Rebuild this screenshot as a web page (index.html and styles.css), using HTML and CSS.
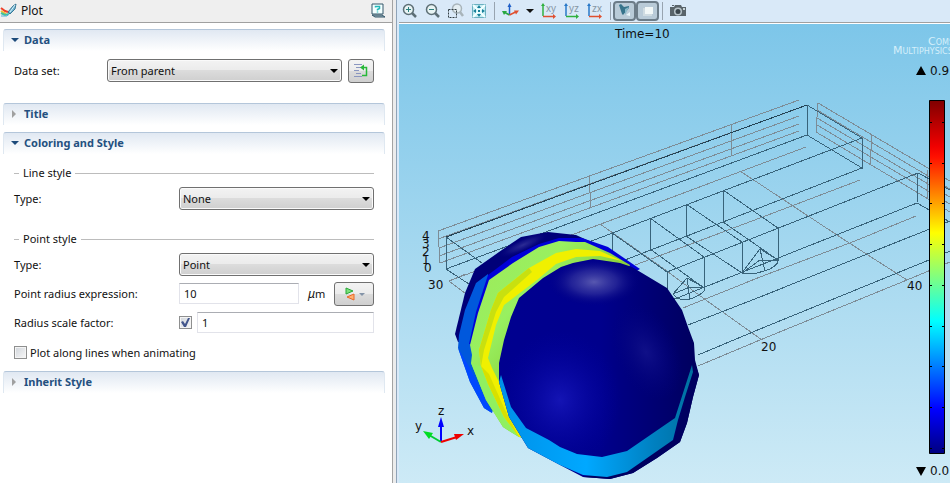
FILE: index.html
```html
<!DOCTYPE html>
<html lang="en">
<head>
<meta charset="utf-8">
<title>Plot</title>
<link rel="stylesheet" href="styles.css">
</head>
<body>
<main class="app">
  <section class="settings">
    <header class="titlebar">
      <svg class="plot-icon" width="18" height="16" viewBox="0 0 18 16">
        <path d="M1 5l4 3 3 1" stroke="#f04028" stroke-width="2" fill="none"/>
        <path d="M1 8l5 3" stroke="#f0c030" stroke-width="2" fill="none"/>
        <path d="M1 10l4 2 4-1" stroke="#40c0a0" stroke-width="2" fill="none"/>
        <path d="M1 13h6l3-3" stroke="#58b0d8" fill="none"/>
        <path d="M8 9l5-6 3-2-1 5-5 5z" fill="#6fb4d0" stroke="#3a7896"/>
        <path d="M10 9l5-7" stroke="#d8f0fa"/>
      </svg>
      <h1>Plot</h1>
      <button class="help" aria-label="Help">
        <svg width="16" height="16" viewBox="0 0 16 16">
          <path d="M2 1h11v10H2z" fill="#f4ffff" stroke="#34586a"/>
          <path d="M2 12h10l3 2H5z" fill="#9ab0ba" stroke="#34586a"/>
          <path d="M5.500 4.500V3.500h4v2l-2 1v1M7.500 8.500v1" stroke="#20b8b8" stroke-width="1.500" fill="none"/>
        </svg>
      </button>
    </header>

    <div class="sections">
      <h2 class="bar open"><button>Data</button></h2>
      <div class="body data">
        <div class="row wide">
          <label for="dataset">Data set:</label>
          <div class="drop"><select id="dataset"><option>From parent</option></select></div>
          <button class="tool go" aria-label="Go to source">
            <svg width="16" height="16" viewBox="0 0 16 16">
              <path d="M1 1.500h8M3 4.500h5M1 7.500h5M3 10.500h5M1 13.500h8" stroke="#8a96c0"/>
              <path d="M9 12.500h4.500v-8H9" stroke="#28b838" stroke-width="1.500" fill="none"/>
              <path d="M7 4.500l4-3v6z" fill="#28b838"/>
            </svg>
          </button>
        </div>
      </div>

      <h2 class="bar"><button>Title</button></h2>

      <h2 class="bar open spaced"><button>Coloring and Style</button></h2>
      <div class="body style">
        <h3>Line style</h3>
        <div class="row">
          <label for="ltype">Type:</label>
          <div class="drop"><select id="ltype"><option>None</option></select></div>
        </div>
        <h3 class="next">Point style</h3>
        <div class="row">
          <label for="ptype">Type:</label>
          <div class="drop"><select id="ptype"><option>Point</option></select></div>
        </div>
        <div class="row">
          <label for="radius">Point radius expression:</label>
          <div class="fields">
            <input id="radius" type="text" value="10">
            <span class="unit"><i>μ</i>m</span>
            <button class="tool expr" aria-label="Replace expression">
              <svg width="24" height="16" viewBox="0 0 24 16">
                <path d="M4 2l7 3-7 3z" fill="#7be07b" stroke="#28a838"/>
                <path d="M12 8v6l-7-3z" fill="#ffb070" stroke="#e86828"/>
                <path d="M17 7h6l-3 3z" fill="#8494a8"/>
              </svg>
            </button>
          </div>
        </div>
        <div class="row">
          <label for="factor">Radius scale factor:</label>
          <div class="fields tight">
            <input type="checkbox" checked aria-label="Use radius scale factor">
            <input id="factor" type="text" value="1">
          </div>
        </div>
        <div class="row check">
          <input id="along" type="checkbox">
          <label for="along">Plot along lines when animating</label>
        </div>
      </div>

      <h2 class="bar"><button>Inherit Style</button></h2>
    </div>
  </section>

  <section class="graphics">
    <nav class="toolbar">
      <button aria-label="Zoom in"><svg width="16" height="16" viewBox="0 0 16 16"><circle cx="6.500" cy="6.500" r="5" fill="#e8f4f4" stroke="#5d6f76" stroke-width="1.500"/><path d="M10 10l4 4" stroke="#5d6f76" stroke-width="2.500"/><path d="M4 6.500h5M6.500 4v5" stroke="#2a8080"/></svg></button>
      <button aria-label="Zoom out"><svg width="16" height="16" viewBox="0 0 16 16"><circle cx="6.500" cy="6.500" r="5" fill="#e8f4f4" stroke="#5d6f76" stroke-width="1.500"/><path d="M10 10l4 4" stroke="#5d6f76" stroke-width="2.500"/><path d="M4 6.500h5" stroke="#2a8080"/></svg></button>
      <button aria-label="Zoom box"><svg width="16" height="16" viewBox="0 0 16 16"><circle cx="9" cy="5.500" r="4.500" fill="#e4eef2" stroke="#a8b4ba" stroke-width="1.500"/><path d="M12 9l3 4" stroke="#a8b4ba" stroke-width="2.500"/><path d="M.5 6.500h8v8h-8z" fill="none" stroke="#333f44" stroke-dasharray="2 1"/></svg></button>
      <button aria-label="Zoom extents"><svg width="16" height="16" viewBox="0 0 16 16"><path d="M1.500 1.500h13v13h-13z" fill="#c8ecf4" stroke="#6ab0c0"/><path d="M2 2l12 12M14 2L2 14" stroke="#f0ffff" stroke-width="2"/><path d="M8 2l2 3H6zM8 14l2-3H6zM2 8l3-2v4zM14 8l-3-2v4z" fill="#167f98"/><path d="M7 7h2v2H7z" fill="#167f98"/></svg></button>
      <span class="sep"></span>
      <button aria-label="Default 3D view"><svg width="18" height="16" viewBox="0 0 18 16"><path d="M8.500 12V3" stroke="#2060c8" stroke-width="1.500"/><path d="M6.500 4l2-4 2 4z" fill="#2060c8"/><path d="M8.500 12L3 9" stroke="#28a840" stroke-width="1.500"/><path d="M1 8h5l-3 4z" fill="#28a840"/><path d="M8.500 12l6-3" stroke="#e05030" stroke-width="1.500"/><path d="M18 7.500h-5l2 4z" fill="#e05030"/></svg></button>
      <button class="more" aria-label="View menu"><svg width="8" height="6" viewBox="0 0 8 6"><path d="M0 1h8L4 5z" fill="#111"/></svg></button>
      <button aria-label="xy view"><svg width="16" height="16" viewBox="0 0 16 16"><path d="M2 2v11" stroke="#30b040" stroke-width="1.500"/><path d="M0 3l2-3 2 3z" fill="#30b040"/><path d="M2 13.500h11" stroke="#e05030" stroke-width="1.500"/><path d="M12 11l3 2.500-3 2.500z" fill="#e05030"/><text class="v" x="5" y="9">xy</text></svg></button>
      <button aria-label="yz view"><svg width="16" height="16" viewBox="0 0 16 16"><path d="M2 2v11" stroke="#2878c8" stroke-width="1.500"/><path d="M0 3l2-3 2 3z" fill="#2878c8"/><path d="M2 13.500h11" stroke="#30b040" stroke-width="1.500"/><path d="M12 11l3 2.500-3 2.500z" fill="#30b040"/><text class="v" x="5" y="9">yz</text></svg></button>
      <button aria-label="zx view"><svg width="16" height="16" viewBox="0 0 16 16"><path d="M2 2v11" stroke="#2878c8" stroke-width="1.500"/><path d="M0 3l2-3 2 3z" fill="#2878c8"/><path d="M2 13.500h11" stroke="#e05030" stroke-width="1.500"/><path d="M12 11l3 2.500-3 2.500z" fill="#e05030"/><text class="v" x="5" y="9">zx</text></svg></button>
      <span class="sep"></span>
      <span class="toggles">
        <button class="on" aria-label="Scene light" aria-pressed="true"><svg width="16" height="16" viewBox="0 0 16 16"><path d="M2 2l2-1 3 3 5-1v2L6 12 5 11z" fill="#37748c"/><path d="M8 6l4-2-4 8z" fill="#86b8c8"/><path d="M9 12l4-3v4z" fill="#e8f6fa"/></svg></button>
        <button class="on" aria-label="Transparency" aria-pressed="true"><svg width="16" height="16" viewBox="0 0 16 16"><path d="M3 5h9v8H3z" fill="#d0dce2"/><path d="M5 4h8v7H5z" fill="#f2f8f8"/></svg></button>
      </span>
      <span class="sep close"></span>
      <button aria-label="Image snapshot"><svg width="18" height="16" viewBox="0 0 18 16"><path d="M1 4h4l1-2h6l1 2h4v9H1z" fill="#59646a"/><path d="M3 2h2v1H3z" fill="#59646a"/><circle cx="9" cy="8.500" r="4" fill="#b8c4ca"/><circle cx="9" cy="8.500" r="2.500" fill="#3b464c"/><path d="M14 5h2v2h-2z" fill="#c8d4d8"/></svg></button>
    </nav>

    <svg class="scene" viewBox="399 24 551 459" preserveAspectRatio="xMinYMin slice" role="img" aria-label="3D plot, Time=10">
      <defs>
        <linearGradient id="jet" x1="0" y1="0" x2="0" y2="1">
          <stop offset="0" stop-color="#800000"/><stop offset=".13" stop-color="#f00000"/><stop offset=".16" stop-color="#ff1000"/>
          <stop offset=".375" stop-color="#ffff00"/><stop offset=".5" stop-color="#80ff80"/><stop offset=".625" stop-color="#00ffff"/>
          <stop offset=".875" stop-color="#0000ff"/><stop offset="1" stop-color="#000080"/>
        </linearGradient>
        <radialGradient id="shine"><stop offset="0" stop-color="#5858b0"/><stop offset=".5" stop-color="#30309c" stop-opacity=".7"/><stop offset="1" stop-color="#000080" stop-opacity="0"/></radialGradient>
        <radialGradient id="glow"><stop offset="0" stop-color="#1414b4"/><stop offset="1" stop-color="#0000a0" stop-opacity="0"/></radialGradient>
        <radialGradient id="soft"><stop offset="0" stop-color="#101088"/><stop offset="1" stop-color="#000080" stop-opacity="0"/></radialGradient>
        <linearGradient id="ball" x1="0" y1="0" x2="1" y2="0"><stop offset="0" stop-color="#000090"/><stop offset=".5" stop-color="#00008c"/><stop offset="1" stop-color="#000058"/></linearGradient>
        <linearGradient id="cyan" x1="0" y1="0" x2="1" y2="0"><stop offset="0" stop-color="#0090e8"/><stop offset=".45" stop-color="#00a8ff"/><stop offset=".8" stop-color="#0080c0"/><stop offset="1" stop-color="#0070a0"/></linearGradient>
        <linearGradient id="green" x1="0" y1="0" x2="1" y2="1"><stop offset="0" stop-color="#a0e858"/><stop offset=".3" stop-color="#98f060"/><stop offset=".6" stop-color="#88c830"/><stop offset="1" stop-color="#b0f040"/></linearGradient>
        <clipPath id="front"><path d="M499 363L504 340L511 317L519 298L543 278L561 267L573 263L593 259L620 263L632 267L667 288L682 310L688 327L694 343L695 360L699 375L693 397L687 423L680 442L657 458L633 473L610 479L583 477L560 465L528 448L509 417L499 382z"/></clipPath>
      </defs>

      <g class="grid">
        <path d="M438 231L799 100M438 239L799 108M439 248L799 116M439 256L799 124M440 263L799 131M438 231L440 263M449 281L806 147M589 177L591 208M732 124L731 156"/>
        <path d="M818 103L950 181M817 110L950 189M817 118L950 197M817 125L950 204M816 132L950 212M818 103L816 132M872 135L870 165M928 170L927 200"/>
        <path d="M698 366L760 340L907 280L950 262M683 308L760 277L855 241L916 216M635 265L760 218L860 180M740 171L843 239L907 280M600 224L667 271L703 298L762 340M449 281L466 294M449 281L466 274"/>
      </g>
      <g class="wire">
        <path class="edge" d="M446 237L807 105"/>
        <path d="M446 237V269L807 135V105L862 138V168L807 135M446 237L482 263M446 269L475 288"/>
        <path d="M862 138L560 253M862 168L723 222L612 265M918 173L667 272M917 203L667 302M918 173L917 203M918 173L950 190M917 203L950 222"/>
        <path d="M723 190V222L778 260V228zM686 204V236L742 273V242zM650 218V249L704 288V257zM612 233V265L667 302V272z"/>
        <path d="M688 325L760 297L902 240L950 221M698 355L760 329L929 260L950 251"/>
        <path d="M687 278L673 294Q680 303 693 298Q705 293 705 288zM687 278L690 300M673 294L690 287L705 288"/>
        <path d="M760 249L742 273Q754 275 764 271Q778 267 778 260zM760 249L765 271M742 273L760 260L778 260"/>
      </g>

      <g>
        <path d="M455 334L465 293L475 269L499 252L521 237L548 232L576 235L600 246L637 268L600 310L480 345L458 342z" fill="#000078"/>
        <ellipse cx="523" cy="245" rx="28" ry="7" fill="url(#shine)" opacity=".5" transform="rotate(-24 523 245)"/>
        <path d="M488 274L476 283L465 310L459 335L458 348L470 382L484 408L492 413L500 390L490 330z" fill="#0058dc"/>
        <path d="M458 348L470 382L484 408L492 413L488 404L471 370z" fill="#0048ff"/>
        <path d="M469 344L476 312L488 275L512 257L539 244L559 238L582 238L608 247L640 269L600 290L480 345z" fill="#0000d8"/>
        <path d="M470 345L478 313L489 280L513 263L539 247L559 241L576 242L585 242L610 253L630 265L600 330L530 440L519 437L503 427L486 400L471 363L472 355z" fill="url(#green)"/>
        <path d="M622 261L600 251L576 249L556 253L529 268L498 293L491 310L479 350L481 367L493 400L504 422L519 437L526 437L503 390L492 368L488 358L496 325L504 305L537 280L556 264L576 257L600 256z" fill="#f0f000"/>
        <path d="M498 293L491 310L479 350L481 367L484 350L496 312L504 297L532 272L529 268z" fill="#c8e010"/>
        <path d="M471 363L486 400L503 427L519 437L504 417L488 384L481 366z" fill="#90f060"/>
        <path d="M481 366L488 384L504 417L519 437L505 410L489 374z" fill="#d8e000"/>
        <g clip-path="url(#front)">
          <path d="M490 250H710V483H490z" fill="url(#ball)"/>
          <ellipse cx="560" cy="400" rx="62" ry="70" fill="url(#glow)"/>
          <ellipse cx="646" cy="352" rx="32" ry="52" fill="url(#soft)" transform="rotate(-25 646 352)"/>
          <ellipse cx="594" cy="282" rx="46" ry="24" fill="url(#shine)"/>
        </g>
        <path d="M694 360L699 375L693 397L687 423L680 442L657 458L633 473L610 479L583 477L630 466L674 440L689 390z" fill="#000060"/>
        <path d="M499 382L501 375L511 407L526 428L549 440L560 447L577 454L602 457L627 451L675 418L692 365L693 372L685 397L678 420L673 440L650 456L627 472L607 477L583 475L560 465L528 448L509 417z" fill="url(#cyan)"/>
      </g>

      <g>
        <path d="M441 442V426" stroke="#00f" stroke-width="2"/><path d="M438 427L441 417L444 427z" fill="#00f"/>
        <path d="M441 442L429 435" stroke="#0c3" stroke-width="2"/><path d="M423 431L433 433L429 439z" fill="#0d2"/>
        <path d="M441 442L457 437" stroke="#e00" stroke-width="2"/><path d="M464 434L456 440L454 434z" fill="#e00"/>
        <text x="438" y="415">z</text><text x="415" y="430">y</text><text x="467" y="435">x</text>
      </g>
      <g>
        <text x="615" y="38">Time=10</text>
        <text x="422" y="240">4</text><text x="422" y="248">3</text><text x="422" y="256">2</text><text x="422" y="264">1</text><text x="424" y="272">0</text>
        <text x="428" y="289">30</text><text x="761" y="351">20</text><text x="907" y="290">40</text>
        <text class="mark" x="928" y="45">Comsol</text><text class="mark" x="893" y="54">Multiphysics</text>
      </g>
      <g>
        <path d="M916 75L921 66L926 75zM916 467H926L921 476z"/>
        <text x="930" y="75">0.9</text><text x="930" y="475">0.0</text>
        <path d="M929.500 100.500H944.500V453.500H929.500z" fill="url(#jet)" stroke="#000"/>
        <path d="M930 122.500h2M942 122.500h2M930 163.500h2M942 163.500h2M930 203.500h2M942 203.500h2M930 244.500h2M942 244.500h2M930 285.500h2M942 285.500h2M930 326.500h2M942 326.500h2M930 366.500h2M942 366.500h2M930 407.500h2M942 407.500h2M930 448.500h2M942 448.500h2" stroke="#000"/>
      </g>
    </svg>
  </section>
</main>
</body>
</html>
```

FILE: styles.css
```css
* { box-sizing: border-box; }

body {
  margin: 0;
  font: 12px/16px "Noto Sans", sans-serif;
  color: #111;
}

button, select, input { font: inherit; color: inherit; }
button { padding: 0; border: 0; background: none; }
svg { display: block; }
h1, h2, h3 { margin: 0; font: inherit; }

.app {
  display: flex;
  height: 100vh;
  overflow: hidden;
  background: #ececec;
}

/* Settings pane */
.settings {
  flex: 0 0 393px;
  min-width: 0;
  display: flex;
  flex-direction: column;
  background: #fff;
  border-right: 1px solid #a3a3a3;
  font-size: 11px;
}

.titlebar {
  display: flex;
  align-items: center;
  gap: 3px;
  height: 23px;
  padding-right: 6px;
  background: #efefef;
  border-bottom: 1px solid #a0a0a0;
}
.titlebar h1 { font-size: 12px; }
.help { margin-left: auto; }

.sections { padding: 6px 7px 0 3px; }

.bar {
  height: 22px;
  border: 1px solid;
  border-bottom: 0;
  border-color: #b4c6da #dfe8f1 transparent;
  border-radius: 3px 3px 0 0;
  background: linear-gradient(#e0e8f2, #fff);
}
.bar.spaced { margin-top: 7px; }
.bar button {
  display: flex;
  align-items: center;
  width: 100%;
  height: 20px;
  padding-left: 7px;
  font-size: 11px;
  font-weight: 700;
  color: #24507f;
}
.bar button::before {
  content: "";
  width: 13px;
  height: 8px;
  background: #a0a0a0;
  clip-path: polygon(1px 0, 5px 4px, 1px 8px);
}
.bar.open button::before {
  background: #1d4a7a;
  clip-path: polygon(0 2px, 8px 2px, 4px 6px);
}

.body { padding: 0 11px; }
.data { padding-top: 5px; padding-bottom: 18px; }
.style { padding-top: 8px; padding-bottom: 3px; }

h3 {
  display: flex;
  align-items: center;
  gap: 4px;
  height: 22px;
}
h3::before, h3::after {
  content: "";
  height: 1px;
  background: #bcbcbc;
}
h3::before { width: 5px; }
h3::after { flex: 1; }
h3.next { margin-top: 15px; }

.row {
  display: grid;
  grid-template-columns: 165px minmax(0, 1fr);
  align-items: center;
  height: 29px;
}
.row.wide { grid-template-columns: 93px minmax(0, 1fr) 26px; }
.wide .drop { margin-right: 6px; }
.row.check { display: flex; gap: 3px; height: 31px; }

.drop { position: relative; }
.drop select {
  display: block;
  width: 100%;
  height: 23px;
  padding: 0 20px 0 3px;
  appearance: none;
  border: 1px solid #707070;
  border-radius: 3px;
  background: linear-gradient(#f3f3f3, #ebebeb 50%, #dcdcdc 50%, #cfcfcf);
  box-shadow: inset 0 0 0 1px #fafafa;
}
.drop::after {
  content: "";
  position: absolute;
  top: 10px;
  right: 4px;
  border: 4px solid transparent;
  border-top-color: #000;
  border-bottom: 0;
}

.tool {
  display: grid;
  place-items: center;
  height: 24px;
  border: 1px solid #707070;
  border-radius: 3px;
  background: linear-gradient(#f3f3f3, #ebebeb 50%, #dcdcdc 50%, #cfcfcf);
}
.expr { width: 40px; }

.fields { display: flex; align-items: center; }
.fields input[type="text"] {
  flex: 1;
  min-width: 0;
  height: 21px;
  padding: 0 4px;
  border: 1px solid #e2e3ea;
  border-top-color: #abadb3;
  background: #fff;
}
.unit { width: 35px; padding-left: 9px; }
.unit i { font-size: 12px; }
.tight { gap: 5px; }

input[type="checkbox"] {
  flex: none;
  display: grid;
  place-items: center;
  width: 13px;
  height: 13px;
  margin: 0;
  appearance: none;
  border: 1px solid #8e8f8f;
  background: linear-gradient(135deg, #cfd4da, #f8f8f8);
  box-shadow: inset 0 0 0 1px #f4f4f4;
}
input[type="checkbox"]:checked::before {
  content: "";
  width: 9px;
  height: 9px;
  background: #43568c;
  clip-path: polygon(0 4px, 2px 3px, 4px 6px, 7px 0, 9px 0, 5px 9px, 3px 9px);
}

/* Graphics pane */
.graphics {
  flex: 1;
  min-width: 0;
  display: flex;
  flex-direction: column;
  margin-left: 3px;
  border-left: 1px solid #8fa3b8;
  background: #d9e9f8;
  padding-left: 2px;
}

.toolbar {
  display: flex;
  align-items: center;
  gap: 7px;
  height: 23px;
  padding-left: 3px;
  border-bottom: 1px solid #a0a0a0;
}
.sep { width: 1px; height: 18px; margin-right: -1px; background: #98a4b0; }
.v { font: 10px "Liberation Sans", sans-serif; fill: #8796a4; }
.toggles { display: flex; margin-left: -4px; }
.on {
  display: grid;
  place-items: center;
  width: 23px;
  height: 20px;
  border: 2px solid #6c7c88;
  border-radius: 4px;
  background: #b9cbd8;
}
.sep.close { margin-left: -4px; }

.scene {
  flex: 1;
  min-height: 0;
  width: 100%;
  border-top: 1px solid #fff;
  background: linear-gradient(#7dc6e9, #cdeaf6);
}
.scene text { font: 12px "DejaVu Sans", sans-serif; fill: #111; }
.scene .mark {
  font: small-caps 11px "DejaVu Sans", sans-serif;
  fill: #d5effa;
}
.grid path { fill: none; stroke: #7d8c96; shape-rendering: crispEdges; }
.wire path { fill: none; stroke: #38637a; shape-rendering: crispEdges; }
.wire .edge { stroke: #234254; }
```
